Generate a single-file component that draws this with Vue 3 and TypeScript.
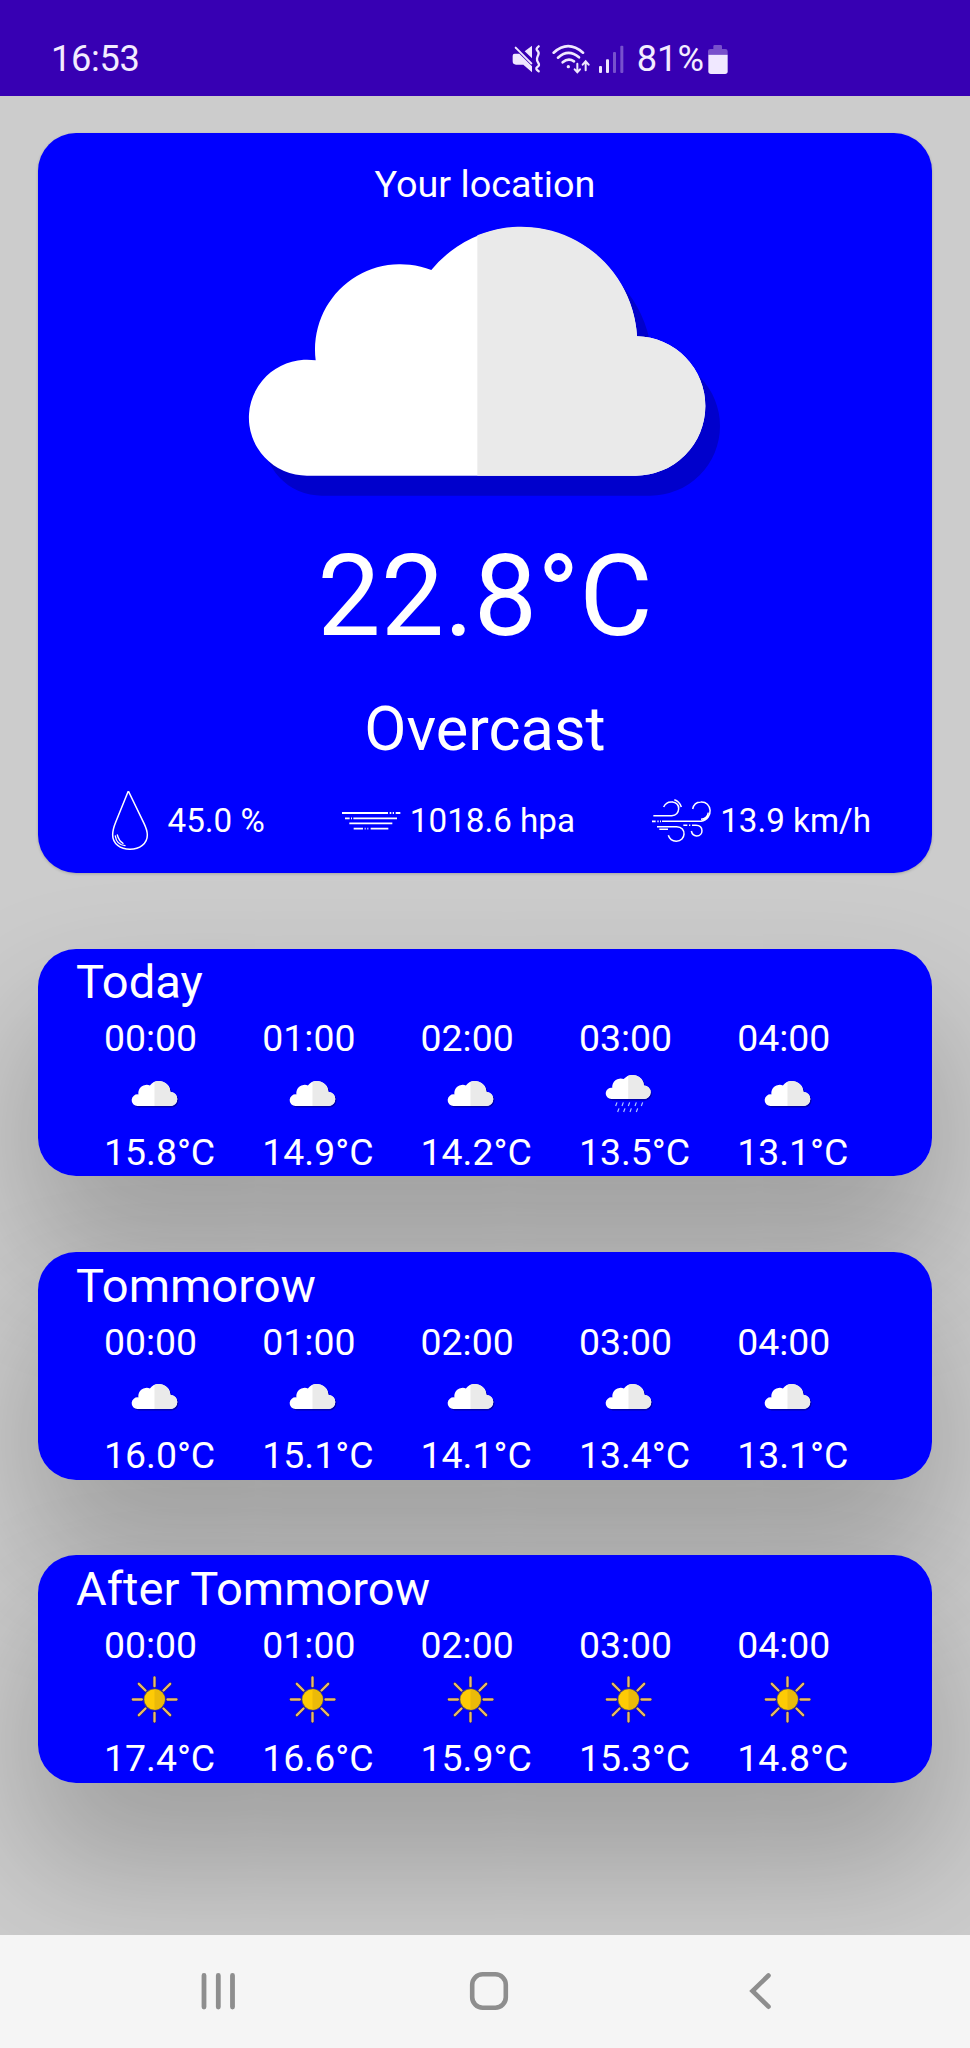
<script setup lang="ts">
type Sky = 'cloud' | 'rain' | 'sun'

interface Hour {
  time: string
  sky: Sky
  temp: string
}

interface Day {
  title: string
  hours: Hour[]
}

const hoursOf = (temps: string[], skies: Sky[]): Hour[] =>
  temps.map((temp, i) => ({ time: `0${i}:00`, sky: skies[i], temp: `${temp}°C` }))

const days: Day[] = [
  {
    title: 'Today',
    hours: hoursOf(['15.8', '14.9', '14.2', '13.5', '13.1'], ['cloud', 'cloud', 'cloud', 'rain', 'cloud']),
  },
  {
    title: 'Tommorow',
    hours: hoursOf(['16.0', '15.1', '14.1', '13.4', '13.1'], ['cloud', 'cloud', 'cloud', 'cloud', 'cloud']),
  },
  {
    title: 'After Tommorow',
    hours: hoursOf(['17.4', '16.6', '15.9', '15.3', '14.8'], ['sun', 'sun', 'sun', 'sun', 'sun']),
  },
]

const cloudPath =
  'M232 797A174 174 0 1 1 257 451A256 256 0 0 1 604 180A348 348 0 0 1 1221 379A209 209 0 0 1 1426 588A209 209 0 0 1 1217 797Z'
const cloudRight = 'M742 76A348 348 0 0 1 1221 379A209 209 0 0 1 1426 588A209 209 0 0 1 1217 797H742Z'
const drops = [
  [79, 124], [98, 124], [117, 124], [137, 124], [156, 124],
  [85, 142], [103, 142], [122, 142], [141, 142],
]
</script>

<template>
  <div class="screen">
    <header class="status">
      <span class="clock">16:53</span>
      <div class="indicators">
        <svg width="38" height="32" viewBox="66 66 114 96">
          <path d="M68 104q0-6 6-6h14l38 38v18l-26-23H78q-10 0-10-10z" fill="#f0e8ff" />
          <path d="M104 91l22-17v38z" fill="#f0e8ff" />
          <path d="M77 80l47 47" stroke="#f0e8ff" stroke-width="6" stroke-linecap="round" />
          <path d="M146 76q-10 7-4 13t3 12-4 12 4 13-3 12 4 13" fill="none" stroke="#f0e8ff" stroke-width="7" stroke-linecap="round" />
        </svg>
        <svg width="44" height="32" viewBox="180 66 132 96">
          <g fill="none" stroke="#f0e8ff" stroke-width="8" stroke-linecap="round">
            <path d="M191 95Q234 56 279 95" />
            <path d="M204 110Q235 82 267 109" />
            <path d="M218 124Q235 109 252 121" />
            <path d="M262 128v25M254 145l8 9 8-9" stroke-width="6" />
            <path d="M287 148v-26M278 131l9-10 9 10" stroke-width="6" />
          </g>
          <circle cx="235" cy="137" r="5" fill="#f0e8ff" />
        </svg>
        <svg width="34" height="32" viewBox="312 66 102 96">
          <g fill="#f0e8ff">
            <rect x="327" y="135" width="9" height="21" rx="3" />
            <rect x="348" y="115" width="9" height="41" rx="3" />
            <rect x="369" y="93" width="9" height="63" rx="3" opacity=".35" />
            <rect x="391" y="74" width="9" height="82" rx="3" opacity=".35" />
          </g>
        </svg>
        <span class="charge">81%</span>
        <svg width="24" height="32" viewBox="649 66 72 96">
          <path d="M655 101V91q0-7 7-7h9V76q0-4 4-4h18q4 0 4 4v8h10q7 0 7 7v10z" fill="#7850cb" />
          <path d="M656 101h58v50q0 8-8 8h-42q-8 0-8-8z" fill="#f0e8ff" />
        </svg>
      </div>
    </header>

    <main class="content">
      <section class="card current">
        <div class="place">Your location</div>
        <svg class="hero" viewBox="0 0 1530 900">
          <path :d="cloudPath" fill="#0000cc" transform="translate(44 60)" />
          <path :d="cloudPath" fill="#fff" />
          <path :d="cloudRight" fill="#eaeaea" />
        </svg>
        <div class="degrees">22.8°C</div>
        <div class="summary">Overcast</div>
        <div class="metrics">
          <div class="metric">
            <svg viewBox="27 62 180 180">
              <g fill="none" stroke="#fff" stroke-width="4.5" stroke-linecap="round">
                <path d="M112 62L74 156Q65 178 65 194C65 220 88 237 117 237S169 220 169 194Q169 180 159 159Z" />
                <path d="M73 197C75 214 86 224 102 226M79 194q5 18 17 25" stroke-width="4" />
              </g>
            </svg>
            <span>45.0 %</span>
          </div>
          <div class="metric">
            <svg viewBox="755 60 180 180">
              <path
                d="M755 126H893M898 126h5M907 126h4M916 126h14M764 142h14M782 142h3M789 142H920M777 157h129M790 173h28M823 173h3M831 173h3M841 173h53"
                fill="none" stroke="#fff" stroke-width="5.5"
              />
            </svg>
            <span>1018.6 hpa</span>
          </div>
          <div class="metric">
            <svg viewBox="488 62 180 180">
              <g fill="none" stroke="#fff" stroke-width="4.5">
                <path d="M492 136H547Q567 134 568 115C567 91 533 87 523 110M549 95Q565 97 569 112M555 88Q570 92 576 110" />
                <path d="M518 153H635C675 145 668 92 634 95Q614 96 610 116M657 127Q654 145 635 147" />
                <path d="M488 153h11M504 153h4M512 153h3" stroke-width="5" />
                <path d="M503 169H562C593 170 590 213 561 213Q542 212 537 195M510 177h26" />
                <path d="M582 165h12M599 165h4M608 165H620C644 166 643 196 622 197Q609 196 606 182" />
              </g>
            </svg>
            <span>13.9 km/h</span>
          </div>
        </div>
      </section>

      <section v-for="day in days" :key="day.title" class="card day">
        <h2>{{ day.title }}</h2>
        <div class="hours">
          <div v-for="hour in day.hours" :key="hour.time" class="hour">
            <span>{{ hour.time }}</span>
            <svg v-if="hour.sky === 'cloud'" class="sky" viewBox="-23 -342 1530 1530">
              <path :d="cloudPath" fill="#0000b0" transform="translate(36 44)" />
              <path :d="cloudPath" fill="#fff" />
              <path :d="cloudRight" fill="#eaeaea" />
            </svg>
            <svg v-else-if="hour.sky === 'rain'" class="sky" viewBox="39 21 153 153">
              <g transform="translate(41.5 37) scale(.0985 .0965)">
                <path :d="cloudPath" fill="#0000b0" transform="translate(36 44)" />
                <path :d="cloudPath" fill="#fff" />
                <path :d="cloudRight" fill="#eaeaea" />
              </g>
              <path
                v-for="([x, y], i) in drops" :key="i"
                :d="`M${x + 2} ${y}l-4 11`" stroke="#b4ccff" stroke-width="3.5"
              />
            </svg>
            <svg v-else class="sky" viewBox="385.5 432.5 153 153">
              <g fill="none" stroke-linecap="round">
                <path
                  v-for="stroke in [{ c: '#1a1690', w: 11 }, { c: '#eabb62', w: 7 }]" :key="stroke.c"
                  d="M462 443v26M462 549v26M397 509h27M501 509h27M415 462l20 20M509 462l-20 20M415 556l20-20M509 556l-20-20"
                  :stroke="stroke.c" :stroke-width="stroke.w"
                />
              </g>
              <circle cx="462" cy="509" r="33" fill="#5d5564" />
              <circle cx="462" cy="509" r="30.5" fill="#fecb05" />
              <path d="M462 478.5a30.5 30.5 0 0 1 0 61z" fill="#ebba09" />
            </svg>
            <span>{{ hour.temp }}</span>
          </div>
        </div>
      </section>
    </main>

    <nav class="navbar">
      <svg width="36" height="40" viewBox="0 0 36 40">
        <path d="M4 4.5v31.5M18.3 4.5v31.5M32.5 4.5v31.5" stroke="#8e8e8e" stroke-width="4.8" stroke-linecap="round" />
      </svg>
      <svg class="home" width="40" height="40" viewBox="0 0 40 40">
        <rect x="3.2" y="3.2" width="33.6" height="33.6" rx="10.5" fill="none" stroke="#8e8e8e" stroke-width="4.6" />
      </svg>
      <svg width="24" height="40" viewBox="0 0 24 40">
        <path d="M20.5 4.5L4.5 20l16 15.7" fill="none" stroke="#8e8e8e" stroke-width="4.6" stroke-linecap="round" />
      </svg>
    </nav>
  </div>
</template>

<style>
body {
  margin: 0;
}
</style>

<style scoped>
.screen {
  width: 970px;
  height: 2048px;
  display: flex;
  flex-direction: column;
  overflow: hidden;
  background: #ccc;
  color: #fff;
  font-family: Roboto, "Liberation Sans", sans-serif;
}

svg {
  display: block;
  flex: none;
}

.status {
  flex: none;
  height: 95.5px;
  box-sizing: border-box;
  padding: 36.5px 240px 0 51px;
  display: flex;
  align-items: flex-start;
  justify-content: space-between;
  background: #3700b3;
  color: #f3ecff;
  font-size: 36.2px;
  line-height: 44px;
}

.clock {
  letter-spacing: -.3px;
}

.indicators {
  display: flex;
  align-items: center;
}

.charge {
  width: 69.3px;
  margin-left: 9px;
  white-space: nowrap;
}

.content {
  flex: 1;
  padding: 37.7px 38px 0;
  position: relative;
  z-index: 0;
  overflow: hidden;
}

.card {
  background: #00f;
  border-radius: 38px;
}

.current {
  height: 740px;
  box-sizing: border-box;
  padding-top: 29px;
  display: flex;
  flex-direction: column;
  align-items: center;
  box-shadow: 0 1px 3px rgba(0, 0, 0, .2);
}

.place {
  font-size: 37.75px;
  line-height: 44px;
}

.hero {
  width: 510px;
  height: 300px;
  margin-top: 4px;
}

.degrees {
  margin-top: 21px;
  font-size: 112.8px;
  line-height: 132px;
}

.summary {
  margin-top: 29.5px;
  font-size: 61.3px;
  line-height: 72px;
}

.metrics {
  align-self: stretch;
  margin-top: 26.8px;
  padding: 0 61px 0 61.5px;
  display: flex;
  justify-content: space-between;
  font-size: 33.2px;
  line-height: 38px;
}

.metric {
  display: flex;
  align-items: center;
  gap: 8px;
}

.metric svg {
  width: 60px;
  height: 60px;
}

.day {
  height: 227.5px;
  margin-top: 75.7px;
  box-sizing: border-box;
  padding: 5.5px 38px 0;
  position: relative;
}

/* The shadow sits on its own layer so that it never falls across a neighbouring card. */
.day::before {
  content: "";
  position: absolute;
  inset: 0;
  z-index: -1;
  border-radius: 38px;
  box-shadow: 0 74px 130px 12px rgba(0, 0, 0, .21);
}

h2 {
  margin: 0;
  font-size: 47.1px;
  font-weight: 400;
  line-height: 55px;
}

.hours {
  display: grid;
  grid-template-columns: repeat(5, 158.3px);
  margin: 7px 0 0 28px;
  font-size: 37.4px;
  line-height: 44px;
}

.hour {
  display: flex;
  flex-direction: column;
}

.sky {
  width: 51px;
  height: 51px;
  margin: 7.4px 0 11.2px 24.5px;
}

.navbar {
  flex: none;
  height: 113px;
  padding: 0 198px 2px 200px;
  box-sizing: border-box;
  display: flex;
  align-items: center;
  justify-content: space-between;
  background: #f5f5f5;
}

.home {
  margin-right: 6px;
}
</style>
